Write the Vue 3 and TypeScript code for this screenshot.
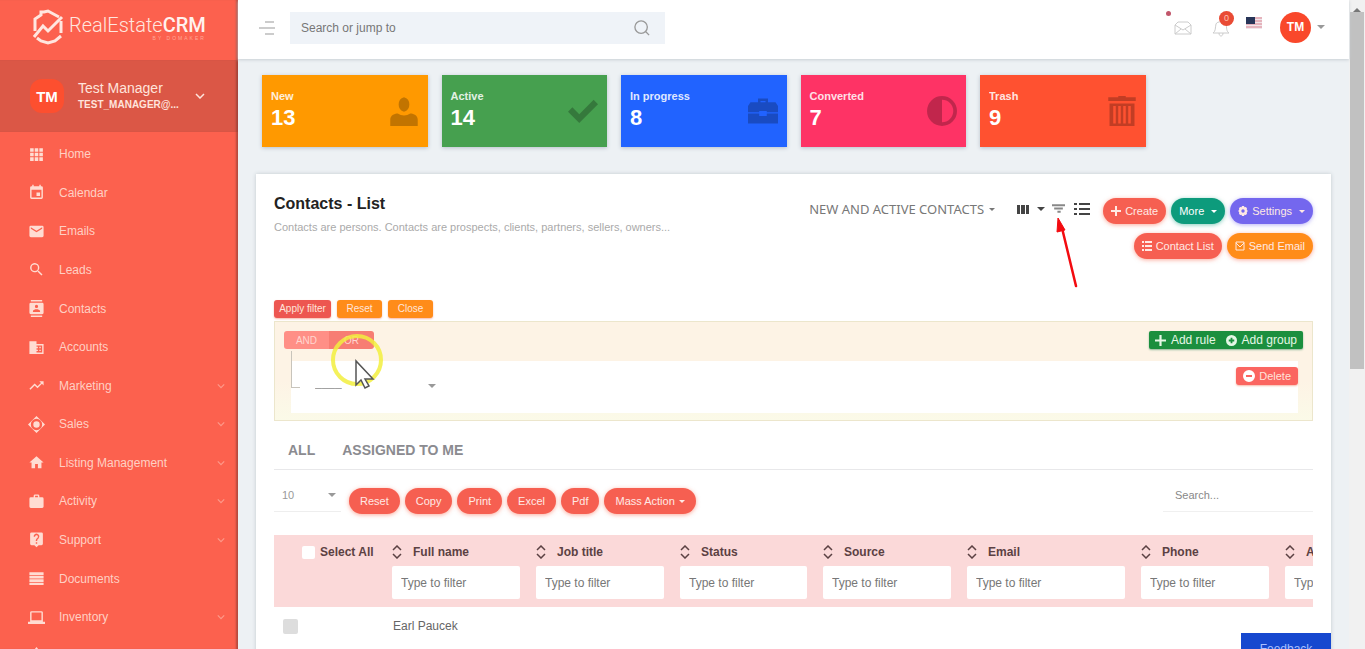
<script setup lang="ts">
import { ref } from 'vue'

interface NavItem { label: string; icon: string; expandable?: boolean }
interface Stat { label: string; value: number; color: string; icon: string }
interface Column { label: string; width: number }

const nav: NavItem[] = [
  { label: 'Home', icon: 'M3 3h5v5H3zM9.500 3h5v5h-5zM16 3h5v5h-5zM3 9.500h5v5H3zM9.500 9.500h5v5h-5zM16 9.500h5v5h-5zM3 16h5v5H3zM9.500 16h5v5h-5zM16 16h5v5h-5z' },
  { label: 'Calendar', icon: 'M17 12h-5v5h5v-5zM16 1v2H8V1H6v2H5a2 2 0 0 0-2 2v14a2 2 0 0 0 2 2h14a2 2 0 0 0 2-2V5a2 2 0 0 0-2-2h-1V1h-2zm3 18H5V8h14v11z' },
  { label: 'Emails', icon: 'M20 4H4a2 2 0 0 0-2 2v12a2 2 0 0 0 2 2h16a2 2 0 0 0 2-2V6a2 2 0 0 0-2-2zm0 4-8 5-8-5V6l8 5 8-5v2z' },
  { label: 'Leads', icon: 'M15.5 14h-.8l-.3-.3A6.5 6.5 0 1 0 13.700 14.400l.3.3v.8l5 5 1.500-1.500-5-5zm-6 0a4.500 4.500 0 1 1 0-9 4.500 4.500 0 0 1 0 9z' },
  { label: 'Contacts', icon: 'M20 0H4v2h16V0zM4 24h16v-2H4v2zM20 4H4a2 2 0 0 0-2 2v12a2 2 0 0 0 2 2h16a2 2 0 0 0 2-2V6a2 2 0 0 0-2-2zm-8 2.700a2.300 2.300 0 1 1 0 4.600 2.300 2.300 0 0 1 0-4.600zM17 17H7v-1.500c0-1.700 3.300-2.500 5-2.500s5 .8 5 2.500V17z' },
  { label: 'Accounts', icon: 'M12 7V3H2v18h20V7H12zm8 12h-8v-2h2v-2h-2v-2h2v-2h-2V9h8v10zm-2-8h-2v2h2v-2zm0 4h-2v2h2v-2z' },
  { label: 'Marketing', icon: 'M16 6l2.300 2.300-4.900 4.900-4-4L2 16.600 3.400 18l6-6 4 4 6.300-6.300L22 12V6z', expandable: true },
  { label: 'Sales', icon: 'M12 0 24 12 12 24 0 12 12 0zm0 4a8 8 0 1 0 0 16 8 8 0 0 0 0-16zm0 3.500a4.500 4.500 0 1 1 0 9 4.500 4.500 0 0 1 0-9z', expandable: true },
  { label: 'Listing Management', icon: 'M10 20v-6h4v6h5v-8h3L12 3 2 12h3v8z', expandable: true },
  { label: 'Activity', icon: 'M20 6h-4V4a2 2 0 0 0-2-2h-4a2 2 0 0 0-2 2v2H4a2 2 0 0 0-2 2v11a2 2 0 0 0 2 2h16a2 2 0 0 0 2-2V8a2 2 0 0 0-2-2zm-6 0h-4V4h4v2z', expandable: true },
  { label: 'Support', icon: 'M19 2H5a2 2 0 0 0-2 2v14a2 2 0 0 0 2 2h4l3 3 3-3h4a2 2 0 0 0 2-2V4a2 2 0 0 0-2-2zm-6 16h-2v-2h2v2zm2.100-7.800-.9 1c-.7.700-1.200 1.300-1.200 2.800h-2v-.5c0-1.100.5-2.100 1.200-2.800l1.200-1.300A2 2 0 1 0 10 8H8a4 4 0 1 1 7.100 2.200z', expandable: true },
  { label: 'Documents', icon: 'M2 3h20v4H2zM2 8h20v4H2zM2 13h20v4H2zM2 18h20v3H2z' },
  { label: 'Inventory', icon: 'M21 18V5a2 2 0 0 0-2-2H5a2 2 0 0 0-2 2v13H0v3h24v-3h-3zM5 5h14v11H5V5z', expandable: true },
  { label: 'Settings', icon: 'M12 0l4 5h6v6h-6l-4 5-4-5H2V5h6z' },
]

const stats: Stat[] = [
  { label: 'New', value: 13, color: 'orange', icon: 'M12 1a6 6 0 0 1 0 11.500A6 6 0 0 1 12 1zM1 24v-5c0-4 4-5 6-5 3 2 7 2 10 0 2 0 6 1 6 5v5z' },
  { label: 'Active', value: 14, color: 'green', icon: 'M0 12.500l3.500-3.500 5.500 5.500L20.500 3 24 6.500 9 21.500z' },
  { label: 'In progress', value: 8, color: 'blue', icon: 'M8 5V2h8v3h6l2 3v5h-9v-1H9v1H0V8l2-3zM10 5h4V4h-4zM0 14h9v2h6v-2h9v8H0z' },
  { label: 'Converted', value: 7, color: 'pink', icon: 'M12 0a12 12 0 1 0 0 24 12 12 0 0 0 0-24zm0 3a9 9 0 0 1 0 18z' },
  { label: 'Trash', value: 9, color: 'red', icon: 'M9 1V0h6v1h8v3H1V1zM2 6h20v18H2zM5 8v14h2V8zM9 8v14h2V8zM13 8v14h2V8zM17 8v14h2V8z' },
]

const columns: Column[] = [
  { label: 'Full name', width: 144 },
  { label: 'Job title', width: 144 },
  { label: 'Status', width: 143 },
  { label: 'Source', width: 144 },
  { label: 'Email', width: 174 },
  { label: 'Phone', width: 144 },
  { label: 'Address', width: 144 },
]

const exportActions: string[] = ['Reset', 'Copy', 'Print', 'Excel', 'Pdf']
const globalSearch = ref('')
const tableSearch = ref('')
const pageSize = ref('10')
const view = ref('active')
const filters = ref<string[]>(columns.map(() => ''))
</script>

<template>
  <div class="shell">
    <aside class="sidebar">
      <a class="brand" href="#" aria-label="RealEstateCRM">
        <svg class="brand-mark" viewBox="0 0 32 36">
          <path d="M3 22V10l6-4V3h3l4-1L27 8" />
          <path d="M2 28 11 17l5 5L30 8" />
          <path d="M29 12v12M5 29l4 3 7 2 7-2 6-5" />
        </svg>
        <span class="brand-text">
          <span class="brand-name">RealEstate<b>CRM</b></span>
          <small>BY DOMAKER</small>
        </span>
      </a>
      <button class="user" type="button">
        <span class="avatar">TM</span>
        <span class="user-text"><span>Test Manager</span><small>TEST_MANAGER@...</small></span>
        <svg class="chev" viewBox="0 0 10 6"><path d="M1 1l4 4 4-4" /></svg>
      </button>
      <nav>
        <ul>
          <li v-for="item in nav" :key="item.label">
            <a href="#">
              <svg class="nav-icon" viewBox="0 0 24 24"><path :d="item.icon" fill-rule="evenodd" /></svg>
              <span>{{ item.label }}</span>
              <svg v-if="item.expandable" class="chev dim" viewBox="0 0 10 6"><path d="M1 1l4 4 4-4" /></svg>
            </a>
          </li>
        </ul>
      </nav>
    </aside>

    <div class="main">
      <header class="topbar">
        <button class="plain burger" type="button" aria-label="Toggle menu">
          <svg viewBox="0 0 16 14"><path d="M6 1h9M0 7h16M6 13h9" /></svg>
        </button>
        <label class="search">
          <input v-model="globalSearch" type="text" placeholder="Search or jump to" aria-label="Search or jump to" />
          <svg viewBox="0 0 18 18"><circle cx="8" cy="8" r="7" /><path d="M13 13l4 4" /></svg>
        </label>
        <div class="tools">
          <button class="plain mail" type="button" aria-label="Messages">
            <svg viewBox="0 0 18 14"><path d="M1 4v9h16V4L9 9zM1 4l3-3h10l3 3M1 13l6-5M17 13l-6-5" /></svg>
            <i class="dot"></i>
          </button>
          <button class="plain bell" type="button" aria-label="Notifications">
            <svg viewBox="0 0 18 18"><path d="M1 14c3-2 2-5 3-9 1-3 9-3 10 0 1 4 0 7 3 9zM7 14c0 4 4 4 4 0" /></svg>
            <i class="badge">0</i>
          </button>
          <button class="plain" type="button" aria-label="Language">
            <svg class="flag" viewBox="0 0 16 12">
              <path fill="#f1e5ea" d="M0 0h16v12H0z" />
              <path stroke="#d9828f" d="M0 1h16M0 4h16M0 7h16M0 10h16" />
              <path fill="#283558" d="M0 0h9v7H0z" />
            </svg>
          </button>
          <button class="plain account" type="button" aria-label="Account">
            <span class="avatar round">TM</span><i class="caret"></i>
          </button>
        </div>
      </header>

      <main>
        <section class="stats">
          <a v-for="s in stats" :key="s.label" href="#" class="stat" :class="s.color">
            <span class="stat-label">{{ s.label }}</span>
            <span class="stat-value">{{ s.value }}</span>
            <svg viewBox="0 0 24 24"><path :d="s.icon" fill-rule="evenodd" /></svg>
          </a>
        </section>

        <section class="panel">
          <div class="panel-head">
            <div class="titles">
              <h1>Contacts - List</h1>
              <p>Contacts are persons. Contacts are prospects, clients, partners, sellers, owners...</p>
            </div>
            <div class="view-tools">
              <label class="pick view-pick">
                <select v-model="view" aria-label="View"><option value="active">NEW AND ACTIVE CONTACTS</option></select>
                <i class="caret"></i>
              </label>
              <button class="plain cols" type="button" aria-label="Columns">
                <svg viewBox="0 0 12 9"><path d="M0 0h3v9H0zM4 0h4v9H4zM9 0h3v9H9z" /></svg><i class="caret"></i>
              </button>
              <button class="plain filter" type="button" aria-label="Filter">
                <svg viewBox="0 0 12 9"><path d="M0 1h12M2 4h8M5 7h3" /></svg>
              </button>
              <button class="plain list" type="button" aria-label="List view">
                <svg viewBox="0 0 16 14"><path d="M5 2h11M5 7h11M5 12h11M0 2h3M0 7h3M0 12h3" /></svg>
              </button>
            </div>
            <div class="actions">
              <div class="action-row">
                <button class="pill coral" type="button"><svg viewBox="0 0 10 10"><path d="M4 0h2v4h4v2H6v4H4V6H0V4h4z" /></svg>Create</button>
                <button class="pill teal" type="button">More <i class="caret"></i></button>
                <button class="pill violet" type="button">
                  <svg viewBox="0 0 10 10"><path fill-rule="evenodd" d="M4 0h2l.5 1.200L8 1l1 1.500L8.800 4l1.200 1-1.200 1L9 7.500 8 9l-1.500-.2L6 10H4l-.5-1.200L2 9 1 7.500 1.200 6 0 5l1.200-1L1 2.500 2 1l1.500.2zM5 3.300a1.700 1.700 0 1 0 0 3.400 1.700 1.700 0 0 0 0-3.400z" /></svg>Settings <i class="caret"></i>
                </button>
              </div>
              <div class="action-row">
                <button class="pill coral" type="button"><svg viewBox="0 0 10 10"><path d="M0 0h2v2H0zM3 0h7v2H3zM0 4h2v2H0zM3 4h7v2H3zM0 8h2v2H0zM3 8h7v2H3z" /></svg>Contact List</button>
                <button class="pill amber" type="button"><svg viewBox="0 0 10 10"><path class="line" d="M1 1h8v8H1zM1 2l4 4 4-4" /></svg>Send Email</button>
              </div>
            </div>
          </div>

          <div class="filter-bar">
            <button class="tag red" type="button">Apply filter</button>
            <button class="tag amber" type="button">Reset</button>
            <button class="tag amber" type="button">Close</button>
          </div>

          <div class="builder">
            <div class="builder-head">
              <div class="joins"><button type="button">AND</button><button type="button" class="on">OR</button></div>
              <div class="adds">
                <button type="button"><svg viewBox="0 0 10 10"><path d="M4 0h2v4h4v2H6v4H4V6H0V4h4z" /></svg>Add rule</button>
                <button type="button"><svg viewBox="0 0 12 12"><path fill-rule="evenodd" d="M6 0a6 6 0 1 0 0 12A6 6 0 0 0 6 0zM5 3h2v2h2v2H7v2H5V7H3V5h2z" /></svg>Add group</button>
              </div>
            </div>
            <div class="rule">
              <label class="pick rule-pick">
                <select aria-label="Field"><option>____</option></select><i class="caret"></i>
              </label>
              <button class="tag delete" type="button"><svg viewBox="0 0 12 12"><path fill-rule="evenodd" d="M6 0a6 6 0 1 0 0 12A6 6 0 0 0 6 0zM3 5h6v2H3z" /></svg>Delete</button>
            </div>
          </div>

          <div class="tabs"><a href="#">ALL</a><a href="#">ASSIGNED TO ME</a></div>

          <div class="table-tools">
            <label class="pick size-pick">
              <select v-model="pageSize" aria-label="Rows per page"><option>10</option></select><i class="caret"></i>
            </label>
            <div class="exports">
              <button v-for="a in exportActions" :key="a" class="pill coral" type="button">{{ a }}</button>
              <button class="pill coral" type="button">Mass Action<i class="caret"></i></button>
            </div>
            <input v-model="tableSearch" class="table-search" type="text" placeholder="Search..." aria-label="Search table" />
          </div>

          <div class="table-wrap">
            <table>
              <colgroup>
                <col class="check-col" />
                <col v-for="c in columns" :key="c.label" :style="{ width: c.width + 'px' }" />
              </colgroup>
              <thead>
                <tr>
                  <th class="select-all"><label><input type="checkbox" />Select All</label></th>
                  <th v-for="(c, i) in columns" :key="c.label">
                    <button class="plain sort" type="button">
                      <svg viewBox="0 0 10 14"><path d="M1 5l4-4 4 4M1 9l4 4 4-4" /></svg>{{ c.label }}
                    </button>
                    <input v-model="filters[i]" type="text" placeholder="Type to filter" :aria-label="'Filter ' + c.label" />
                  </th>
                </tr>
              </thead>
              <tbody>
                <tr>
                  <td><input type="checkbox" aria-label="Select Earl Paucek" /></td>
                  <td>Earl Paucek</td>
                  <td v-for="n in 6" :key="n"></td>
                </tr>
              </tbody>
            </table>
          </div>
        </section>
      </main>
      <button class="feedback" type="button">Feedback</button>
    </div>

    <div class="scrollbar" aria-hidden="true"><i></i><span></span></div>

    <svg class="pointer-arrow" viewBox="0 0 24 72" aria-hidden="true">
      <path d="M20 70 6 12" stroke="#f30b10" stroke-width="2.500" stroke-linecap="round" />
      <path d="M2 2 9 14 1 16z" fill="#f30b10" stroke="#f30b10" />
    </svg>
    <svg class="cursor" viewBox="0 0 54 64" aria-hidden="true">
      <circle cx="27" cy="32" r="24" fill="none" stroke="#f2ee3e" stroke-width="4" opacity=".85" />
      <path d="M26 33v24l5-5 4 8 4-2-4-7h8z" fill="#fff" stroke="#555" stroke-width="1.500" />
    </svg>
  </div>
</template>

<style>
body { margin: 0; overflow: hidden; }
</style>

<style scoped>
* { box-sizing: border-box; }
.shell { position: relative; display: flex; height: 100vh; overflow: hidden; background: #edf1f4; font-family: "Liberation Sans", Arial, sans-serif; font-size: 12px; color: #555; }
button, input, select { font: inherit; color: inherit; }
button { border: 0; cursor: pointer; }
input::placeholder { color: inherit; opacity: 1; }
a { color: inherit; text-decoration: none; }
svg { display: block; flex: none; fill: currentColor; }
.plain { padding: 0; background: none; }
.caret { flex: none; display: inline-block; border: 4px solid transparent; border-top-color: currentColor; border-bottom: 0; }

.sidebar { flex: none; width: 238px; background: #fc614e; color: #ffd0c4; box-shadow: inset -3px 0 2px -1px #b64a3e; }
.brand { display: flex; align-items: center; gap: 5px; height: 60px; padding: 0 0 6px 32px; color: #ffe6df; }
.brand-mark { width: 32px; height: 36px; fill: none; stroke: currentColor; stroke-width: 3; }
.brand-text { display: flex; flex-direction: column; align-items: flex-end; }
.brand-name { font: 300 20px/22px Roboto, sans-serif; }
.brand-name b { font-weight: 500; color: #fff2ee; }
.brand-text small { font-size: 5px; line-height: 5px; letter-spacing: 2px; color: #ffa899; }
.user { display: flex; align-items: center; width: 100%; height: 72px; padding: 0 33px 0 30px; background: #db5746; color: #ffe4dc; text-align: left; box-shadow: inset -3px 0 2px -1px #a5443a; }
.avatar { display: flex; align-items: center; justify-content: center; width: 34px; height: 34px; border-radius: 12px; background: #fd4f2f; color: #fff; font-size: 15px; font-weight: 700; }
.user-text { display: flex; flex: 1; flex-direction: column; margin-left: 14px; font-size: 14px; line-height: 18px; }
.user-text small { font-size: 10px; line-height: 16px; font-weight: 700; }
.chev { width: 10px; height: 6px; fill: none; stroke: currentColor; stroke-width: 1.5; }
.dim { width: 8px; margin-left: auto; opacity: .5; }
nav ul { display: grid; grid-template-rows: repeat(14, 1fr); height: 543px; margin: 0; padding: 3px 0 0; list-style: none; }
nav li a { display: flex; align-items: center; height: 100%; padding: 0 13px 0 28px; font-size: 12px; }
.nav-icon { width: 17px; height: 17px; margin-right: 14px; color: #ffdcd2; }

.main { position: relative; flex: 1; min-width: 0; }
.topbar { display: flex; align-items: center; height: 59px; padding: 0 24px 4px 21px; background: #fff; box-shadow: 0 1px 3px #c9cfd4; }
.burger { color: #999; }
.burger svg { width: 16px; height: 14px; stroke: currentColor; }
.search { display: flex; align-items: center; width: 375px; height: 32px; margin-left: 15px; padding: 0 15px 0 10px; background: #eff3f8; color: #777; }
.search input { flex: 1; border: 0; outline: 0; background: none; padding: 0 1px; }
.search svg { width: 16px; height: 16px; fill: none; stroke: #999; stroke-width: 1.5; }
.tools { display: flex; align-items: center; margin-left: auto; }
.mail { position: relative; margin-right: 20px; color: #ccc; }
.mail svg { width: 18px; height: 14px; fill: none; stroke: currentColor; }
.dot { position: absolute; left: -8px; top: -10px; width: 5px; height: 5px; border-radius: 50%; background: #c1566a; }
.bell { position: relative; margin-right: 16px; color: #ccc; }
.bell svg { width: 18px; height: 18px; fill: none; stroke: currentColor; }
.badge { position: absolute; left: 7px; top: -8px; width: 15px; height: 15px; border-radius: 50%; background: #e94b35; color: #ffc2b4; font: 9px/15px "Liberation Sans", sans-serif; text-align: center; }
.flag { width: 16px; height: 12px; margin-bottom: 10px; }
.account { display: flex; align-items: center; gap: 6px; margin-left: 18px; padding-bottom: 1px; color: #999; }
.round { width: 31px; height: 31px; border-radius: 50%; font-size: 12px; background: #f9482b; }

.stats { display: grid; grid-template-columns: repeat(6, 1fr); gap: 14px; padding: 16px 24px 0; }
.stat { position: relative; display: flex; flex-direction: column; height: 72px; padding: 12px 9px 0; color: #fff; box-shadow: 0 1px 4px #b8c1cb; }
.stat-label { font-size: 11px; line-height: 18px; font-weight: 700; opacity: .85; }
.stat-value { font-size: 22px; line-height: 26px; font-weight: 700; }
.stat svg { position: absolute; right: 9px; top: 20px; width: 30px; height: 32px; color: rgba(0, 0, 0, .24); }
.orange { background: #ff9900; }
.green { background: #46a04f; }
.blue { background: #2163ff; }
.pink { background: #fe3365; }
.red { background: #ff5130; }

.panel { margin: 27px 18px 0; padding: 18px; height: 700px; background: #fff; box-shadow: 0 0 4px #c3cacf; }
.panel-head { display: flex; align-items: flex-start; height: 108px; }
.titles { flex: 1; min-width: 0; }
h1 { margin: 0; font-size: 16px; line-height: 24px; color: #222; }
.titles p { margin: 3px 0 0; font-size: 11px; line-height: 16px; color: #aaa; white-space: nowrap; }
.view-tools { display: flex; align-items: center; height: 34px; margin-right: 13px; color: #444; }
.pick { position: relative; display: flex; align-items: center; }
.pick select { appearance: none; border: 0; outline: 0; background: none; padding: 0 5px 0 0; }
.view-pick { margin-right: 22px; color: #777; font-family: "Noto Sans", sans-serif; font-size: 13px; }
.view-pick .caret { border-width: 3px; border-bottom: 0; }
.cols { display: flex; align-items: center; gap: 8px; }
.cols svg { width: 12px; height: 9px; }
.filter { margin: 0 9px 0 7px; color: #888; }
.filter svg { width: 13px; height: 10px; stroke: currentColor; stroke-width: 2; }
.list svg { width: 16px; height: 14px; stroke: currentColor; stroke-width: 2; }
.actions { display: flex; flex-direction: column; gap: 9px; padding-top: 6px; }
.action-row { display: flex; justify-content: flex-end; gap: 5px; }
.pill { display: flex; align-items: center; gap: 4px; height: 26px; padding: 0 8px; border-radius: 13px; color: #ffe9e4; font-size: 11px; white-space: nowrap; box-shadow: 0 1px 4px rgba(250, 90, 60, .5); }
.pill svg { width: 10px; height: 10px; }
.pill .caret { margin-left: 3px; border-width: 3px; border-bottom: 0; }
.line { fill: none; stroke: currentColor; }
.coral { background: #f65f51; }
.teal { background: #0d9b7c; box-shadow: 0 1px 4px rgba(13, 155, 124, .5); color: #fff; }
.violet { background: #7467ee; box-shadow: 0 1px 4px rgba(116, 103, 238, .5); }
.amber { background: #ff8c19; }

.filter-bar { display: flex; gap: 6px; }
.tag { height: 18px; padding: 0 5px; border-radius: 3px; color: #ffe4da; font-size: 10px; line-height: 18px; box-shadow: 0 1px 2px #f8b8a8; }
.tag.amber { min-width: 45px; }
.tag.red { background: #ed5650; min-width: 57px; }
.builder { height: 100px; margin-top: 3px; padding: 9px; border: 1px solid #ece6cc; background: linear-gradient(#fdf3e5 60%, #fbfae8); }
.builder-head { display: flex; justify-content: space-between; }
.joins { display: flex; height: 18px; }
.joins button { width: 45px; padding: 0; background: #ff8f86; color: #ffd6d0; font-size: 10px; border-radius: 3px 0 0 3px; }
.joins .on { background: #f77d73; border-radius: 0 3px 3px 0; }
.adds { display: flex; height: 18px; padding: 0 1px; border-radius: 2px; background: #1b8f3e; box-shadow: 0 1px 2px #8db898; }
.adds button { display: flex; align-items: center; gap: 5px; padding: 0 5px; background: none; color: #e5f7e6; font-size: 12px; }
.adds svg { width: 11px; height: 11px; }
.rule { position: relative; display: flex; justify-content: space-between; height: 52px; margin: 12px 5px 0 7px; padding-left: 24px; background: #fff; }
.rule::before { content: ""; position: absolute; left: 0; top: -10px; width: 8px; height: 36px; border: solid #c8c4bb; border-width: 0 0 1px 1px; }
.rule-pick { width: 121px; height: 50px; justify-content: space-between; color: #999; }
.rule-pick select { padding-bottom: 8px; }
.delete { display: flex; align-items: center; gap: 4px; margin-top: 6px; padding: 0 7px; background: #fb6560; font-size: 11px; }
.delete svg { width: 12px; height: 12px; color: #fff; }

.tabs { display: flex; gap: 27px; height: 49px; padding: 0 14px; border-bottom: 1px solid #e8e8ea; color: #8b8b90; font-size: 14px; line-height: 58px; font-weight: 700; }
.table-tools { display: flex; align-items: flex-start; height: 65px; padding-top: 8px; }
.size-pick { justify-content: space-between; width: 67px; height: 34px; padding: 0 5px 0 8px; border-bottom: 1px solid #eee; color: #999; font-size: 11px; }
.exports { display: flex; gap: 5px; margin: 10px 0 0 8px; }
.exports .pill { padding: 0 11px; }
.exports .caret { margin-left: 0; }
.table-search { width: 150px; height: 34px; margin-left: auto; padding: 0 12px; border: 0; border-bottom: 1px solid #f0f0f0; outline: 0; background: none; color: #888; font-size: 11px; }

.table-wrap { overflow: hidden; }
table { width: 1147px; table-layout: fixed; border-collapse: collapse; }
.check-col { width: 110px; }
thead { background: #fbd9d9; color: #5b4143; }
th { height: 72px; padding: 7px 8px 0; vertical-align: top; text-align: left; }
.select-all { padding: 7px 8px 0 28px; font-size: 12px; }
.select-all label { display: flex; align-items: center; gap: 5px; height: 20px; white-space: nowrap; }
.select-all input, td input { appearance: none; flex: none; width: 13px; height: 13px; margin: 0; border-radius: 2px; background: #fff; }
.sort { display: flex; align-items: center; gap: 11px; height: 20px; font-size: 12px; font-weight: 700; }
.sort svg { width: 10px; height: 14px; fill: none; stroke: currentColor; stroke-width: 1.5; }
th > input { display: block; width: 100%; height: 33px; margin-top: 4px; padding: 0 9px; border: 0; border-radius: 2px; outline: 0; background: #fff; color: #777; font-size: 12px; font-weight: 400; }
td { height: 38px; padding: 0 9px; color: #666; }
td input { display: block; width: 15px; height: 15px; background: #ddd; }

.feedback { position: absolute; right: 18px; bottom: -16px; width: 90px; height: 32px; padding: 0; background: #1648cf; color: #a9c0ff; font-size: 12px; }
.scrollbar { display: flex; flex: none; flex-direction: column; align-items: center; width: 16px; background: #f1f1f1; }
.scrollbar i { height: 12px; border: 4px solid transparent; border-bottom-color: #777; border-top: 0; }
.scrollbar span { width: 14px; height: 55%; background: #c1c1c1; }
.pointer-arrow { position: absolute; left: 1056px; top: 216px; width: 24px; height: 72px; fill: none; }
.cursor { position: absolute; left: 330px; top: 328px; width: 54px; height: 64px; }
</style>
